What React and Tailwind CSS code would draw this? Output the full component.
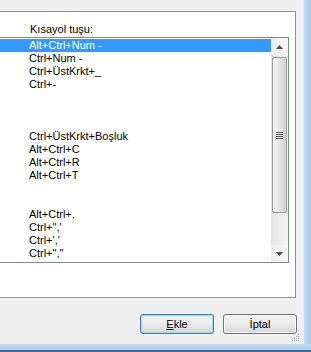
const rows = [
  'Alt+Ctrl+Num -',
  'Ctrl+Num -',
  'Ctrl+ÜstKrkt+_',
  'Ctrl+-',
  '',
  '',
  '',
  'Ctrl+ÜstKrkt+Boşluk',
  'Alt+Ctrl+C',
  'Alt+Ctrl+R',
  'Alt+Ctrl+T',
  '',
  '',
  'Alt+Ctrl+.',
  'Ctrl+",\'',
  "Ctrl+','",
  'Ctrl+","',
];

function ScrollArrow({ up }) {
  return (
    <div className="h-[17px] flex items-center justify-center bg-gradient-to-r from-[#ededed] to-[#f7f7f7]">
      <svg width="7" height="4" viewBox="0 0 7 4">
        {up ? (
          <path d="M3.5 0 L7 4 L0 4 Z" fill="#4d4d4d" />
        ) : (
          <path d="M0 0 L7 0 L3.5 4 Z" fill="#4d4d4d" />
        )}
      </svg>
    </div>
  );
}

function Scrollbar() {
  return (
    <div className="w-[17px] flex flex-col bg-gradient-to-r from-[#e6e6e6] to-[#f4f4f4]">
      <ScrollArrow up />
      <div className="mt-[2px] mx-[1px] h-[156px] rounded-[2px] border border-[#9a9a9a] bg-gradient-to-r from-[#f4f4f4] via-[#e6e6e6] to-[#cfcfcf] flex items-center justify-center">
        <div className="flex flex-col gap-[1px]">
          <div className="w-[7px] h-[1px] bg-[#555]" />
          <div className="w-[7px] h-[1px] bg-[#555]" />
          <div className="w-[7px] h-[1px] bg-[#555]" />
          <div className="w-[7px] h-[1px] bg-[#555]" />
        </div>
      </div>
      <div className="flex-1" />
      <ScrollArrow />
    </div>
  );
}

function Button({ children, primary }) {
  return (
    <button
      className={
        'w-[74px] h-[20px] rounded-[3px] border text-[11px] text-black leading-none flex items-center justify-center bg-gradient-to-b from-[#f2f2f2] via-[#ebebeb] to-[#d6d6d6] ' +
        (primary
          ? 'border-[#3c7fb1] shadow-[inset_0_0_0_1px_#9fd8f6]'
          : 'border-[#707070] shadow-[inset_0_0_0_1px_#fcfcfc]')
      }
    >
      {children}
    </button>
  );
}

export default function App() {
  return (
    <div
      className="w-[311px] h-[352px] bg-[#f0f0f0] flex flex-col overflow-hidden text-[11px] text-black"
      style={{ fontFamily: '"Liberation Sans", Arial, sans-serif' }}
    >
      <div className="flex-1 flex">
        <div className="w-[303px] flex flex-col relative">
          <div className="h-[11px]" />
          <div className="w-[296px] h-[287px] border-t border-r border-b border-[#8e8f8f] bg-white flex flex-col">
            <div className="h-[25px] pl-[30px] pt-[10px] leading-[14px]">Kısayol tuşu:</div>
            <div className="w-[289px] h-[226px] border-t border-r border-b border-[#828790] flex">
              <div className="w-[271px] pt-[1px]">
                {rows.map((r, i) => (
                  <div
                    key={i}
                    className={
                      'h-[13px] leading-[13px] pl-[29px] whitespace-pre ' +
                      (i === 0 ? 'bg-[#3399ff] text-white' : '')
                    }
                  >
                    {r}
                  </div>
                ))}
              </div>
              <Scrollbar />
            </div>
          </div>
          <div className="h-[16px]" />
          <div className="flex justify-end gap-[9px] pr-[6px]">
            <Button primary>
              <span className="underline">E</span>kle
            </Button>
            <Button>İptal</Button>
          </div>
          <svg className="absolute right-[3px] bottom-[2px]" width="10" height="10" viewBox="0 0 10 10">
            <rect x="8" y="2" width="1" height="1" fill="#a0a0a0" />
            <rect x="6" y="4" width="1" height="1" fill="#a0a0a0" />
            <rect x="8" y="4" width="1" height="1" fill="#a0a0a0" />
            <rect x="4" y="6" width="1" height="1" fill="#a0a0a0" />
            <rect x="6" y="6" width="1" height="1" fill="#a0a0a0" />
            <rect x="8" y="6" width="1" height="1" fill="#a0a0a0" />
            <rect x="2" y="8" width="1" height="1" fill="#a0a0a0" />
            <rect x="4" y="8" width="1" height="1" fill="#a0a0a0" />
            <rect x="6" y="8" width="1" height="1" fill="#a0a0a0" />
            <rect x="8" y="8" width="1" height="1" fill="#a0a0a0" />
          </svg>
        </div>
        <div className="w-[8px] flex">
          <div className="w-[1px] bg-[#e4eef8]" />
          <div className="flex-1 bg-gradient-to-r from-[#c3daf1] to-[#a9c8e8]" />
        </div>
      </div>
      <div className="h-[8px] flex flex-col">
        <div className="flex-1 bg-gradient-to-b from-[#c3daf1] to-[#aecbea]" />
        <div className="h-[2px] bg-[#3a6e96]" />
      </div>
    </div>
  );
}
